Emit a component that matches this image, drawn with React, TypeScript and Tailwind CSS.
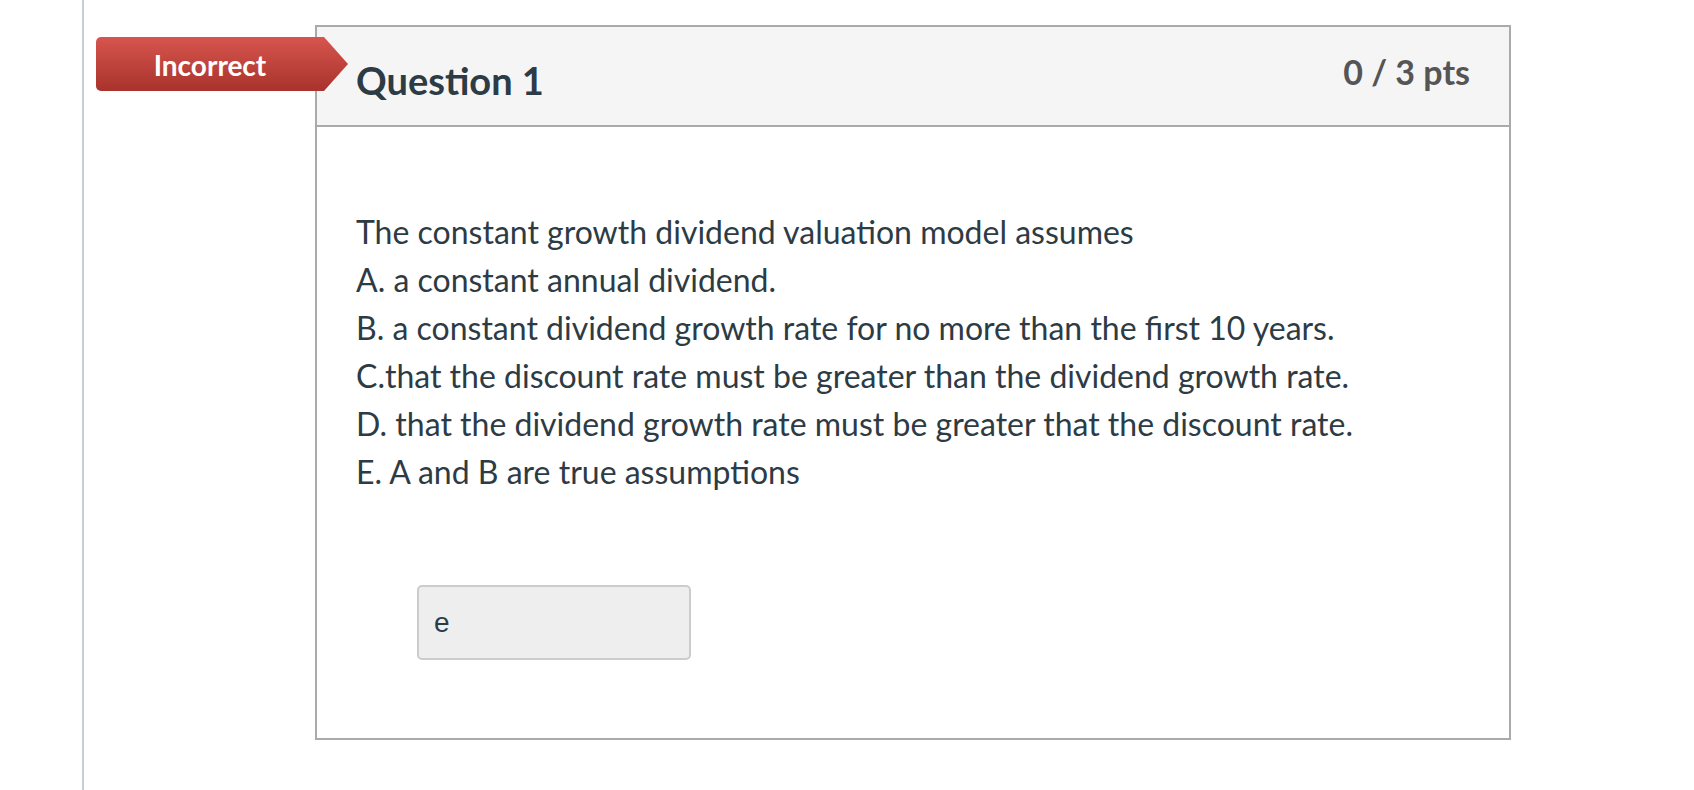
import React from "react";

export default function App() {
  const lines = [
    "The constant growth dividend valuation model assumes",
    "A. a constant annual dividend.",
    "B. a constant dividend growth rate for no more than the first 10 years.",
    "C.that the discount rate must be greater than the dividend growth rate.",
    "D. that the dividend growth rate must be greater that the discount rate.",
    "E. A and B are true assumptions",
  ];
  return (
    <div className="flex min-h-screen bg-white font-['Lato',sans-serif] text-[#2d3b45]">
      <div className="w-[82px] shrink-0" />
      <div className="min-h-screen border-l-2 border-[#c7cdd1] pl-[231px] pt-[25px]">
        <div className="relative w-[1196px] border-2 border-[#aaaaaa]">
          <div className="absolute left-[-221px] top-[10px] flex h-[54px] w-[252px] items-center rounded-l-[5px] bg-linear-to-b from-[#d7554e] to-[#a8332c] pr-[24px] [clip-path:polygon(0_0,calc(100%-24px)_0,100%_50%,calc(100%-24px)_100%,0_100%)]">
            <span className="w-full pt-[1px] text-center text-[28px] font-bold leading-none text-white">
              Incorrect
            </span>
          </div>
          <div className="flex h-[100px] items-start justify-between border-b-2 border-[#aaaaaa] bg-[#f5f5f5] pl-[39px] pr-[39px]">
            <h2 className="mt-[29px] text-[38px] font-bold leading-[48px] text-[#2d3b45]">
              Question 1
            </h2>
            <div className="mt-[25px] text-[34px] font-bold leading-[40px] text-[#555555]">
              0 / 3 pts
            </div>
          </div>
          <div className="pl-[39px] pt-[81px] pb-[78px]">
            <div className="text-[32px] leading-[48px]">
              {lines.map((l) => (
                <div key={l}>{l}</div>
              ))}
            </div>
            <div className="mt-[89px] ml-[61px] flex h-[75px] w-[274px] items-center rounded-[5px] border-2 border-[#cccccc] bg-[#eeeeee] pl-[15px] font-['Liberation_Sans',Arial,sans-serif] text-[28px] text-[#2d3b45]">
              e
            </div>
          </div>
        </div>
      </div>
    </div>
  );
}
